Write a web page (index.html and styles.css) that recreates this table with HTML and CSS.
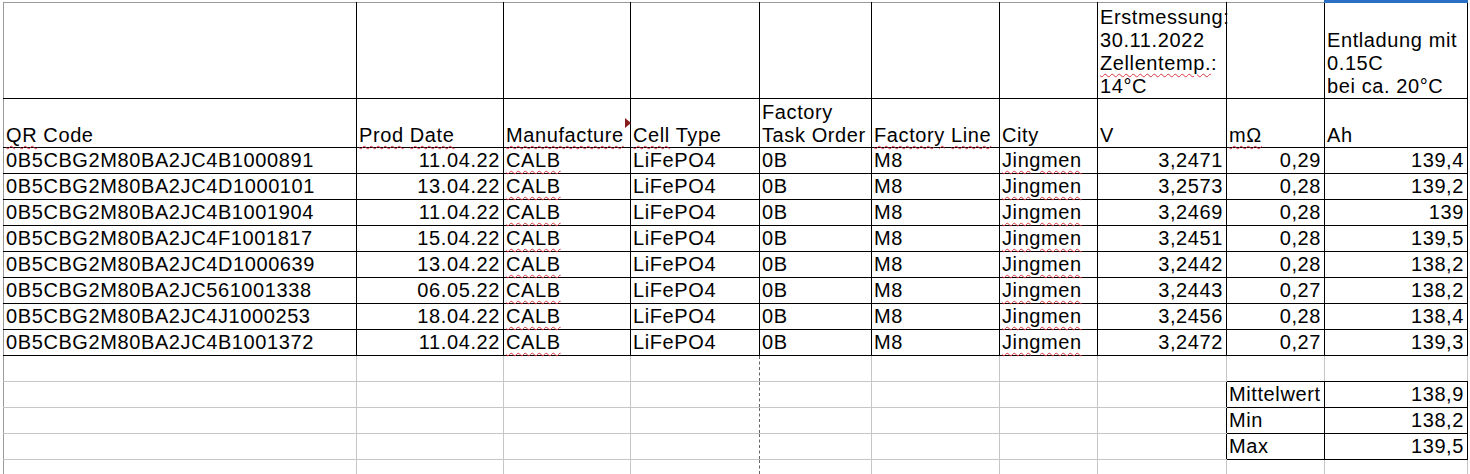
FILE: index.html
```html
<!DOCTYPE html>
<html lang="de">
<head>
  <meta charset="UTF-8" />
  <title>Zellen Messung</title>
  <link rel="stylesheet" href="styles.css">
</head>
<body>
  <table class="sheet">
    <colgroup>
      <col class="c-qr"><col class="c-date"><col class="c-man"><col class="c-type"><col class="c-task">
      <col class="c-line"><col class="c-city"><col class="c-v"><col class="c-mohm"><col class="c-ah">
    </colgroup>

    <tr class="note">
      <td></td><td></td><td></td><td></td><td></td><td></td><td></td>
      <td class="wrap">Erstmessung:<br>30.11.2022<br><span class="sp">Zellentemp.</span>:<br>14°C</td>
      <td></td>
      <td class="wrap sel">Entladung mit<br>0.15C<br>bei ca. 20°C</td>
    </tr>

    <tr class="head">
      <td><span class="sp">QR</span> Code</td>
      <td><span class="sp">Prod</span> <span class="sp">Date</span></td>
      <td class="has-note"><span class="sp">Manufacture</span><span class="marker"></span></td>
      <td><span class="sp">Cell</span> Type</td>
      <td>Factory<br>Task Order</td>
      <td><span class="sp">Factory</span> <span class="sp">Line</span></td>
      <td>City</td>
      <td>V</td>
      <td><span class="sp">mΩ</span></td>
      <td>Ah</td>
    </tr>

    <tr class="data"><td>0B5CBG2M80BA2JC4B1000891</td><td class="num">11.04.22</td><td><span class="sp">CALB</span></td><td>LiFePO4</td><td>0B</td><td>M8</td><td><span class="sp">Jingmen</span></td><td class="num">3,2471</td><td class="num">0,29</td><td class="num">139,4</td></tr>
    <tr class="data"><td>0B5CBG2M80BA2JC4D1000101</td><td class="num">13.04.22</td><td><span class="sp">CALB</span></td><td>LiFePO4</td><td>0B</td><td>M8</td><td><span class="sp">Jingmen</span></td><td class="num">3,2573</td><td class="num">0,28</td><td class="num">139,2</td></tr>
    <tr class="data"><td>0B5CBG2M80BA2JC4B1001904</td><td class="num">11.04.22</td><td><span class="sp">CALB</span></td><td>LiFePO4</td><td>0B</td><td>M8</td><td><span class="sp">Jingmen</span></td><td class="num">3,2469</td><td class="num">0,28</td><td class="num">139</td></tr>
    <tr class="data"><td>0B5CBG2M80BA2JC4F1001817</td><td class="num">15.04.22</td><td><span class="sp">CALB</span></td><td>LiFePO4</td><td>0B</td><td>M8</td><td><span class="sp">Jingmen</span></td><td class="num">3,2451</td><td class="num">0,28</td><td class="num">139,5</td></tr>
    <tr class="data"><td>0B5CBG2M80BA2JC4D1000639</td><td class="num">13.04.22</td><td><span class="sp">CALB</span></td><td>LiFePO4</td><td>0B</td><td>M8</td><td><span class="sp">Jingmen</span></td><td class="num">3,2442</td><td class="num">0,28</td><td class="num">138,2</td></tr>
    <tr class="data"><td>0B5CBG2M80BA2JC561001338</td><td class="num">06.05.22</td><td><span class="sp">CALB</span></td><td>LiFePO4</td><td>0B</td><td>M8</td><td><span class="sp">Jingmen</span></td><td class="num">3,2443</td><td class="num">0,27</td><td class="num">138,2</td></tr>
    <tr class="data"><td>0B5CBG2M80BA2JC4J1000253</td><td class="num">18.04.22</td><td><span class="sp">CALB</span></td><td>LiFePO4</td><td>0B</td><td>M8</td><td><span class="sp">Jingmen</span></td><td class="num">3,2456</td><td class="num">0,28</td><td class="num">138,4</td></tr>
    <tr class="data"><td>0B5CBG2M80BA2JC4B1001372</td><td class="num">11.04.22</td><td><span class="sp">CALB</span></td><td>LiFePO4</td><td>0B</td><td>M8</td><td><span class="sp">Jingmen</span></td><td class="num">3,2472</td><td class="num">0,27</td><td class="num">139,3</td></tr>

    <tr class="blank"><td></td><td></td><td></td><td></td><td></td><td></td><td></td><td></td><td class="cap"></td><td class="cap"></td></tr>
    <tr class="blank"><td></td><td></td><td></td><td></td><td></td><td></td><td></td><td class="edge-r"></td><td class="stat">Mittelwert</td><td class="stat num">138,9</td></tr>
    <tr class="blank"><td></td><td></td><td></td><td></td><td></td><td></td><td></td><td class="edge-r"></td><td class="stat">Min</td><td class="stat num">138,2</td></tr>
    <tr class="blank"><td></td><td></td><td></td><td></td><td></td><td></td><td></td><td class="edge-r"></td><td class="stat">Max</td><td class="stat num">139,5</td></tr>
    <tr class="blank"><td></td><td></td><td></td><td></td><td></td><td></td><td></td><td></td><td></td><td></td></tr>
  </table>
</body>
</html>
```

FILE: styles.css
```css
html, body {
  overflow: hidden;
}

body {
  background-color: #fff;
  font-family: 'Liberation Sans', Arial, sans-serif;
  font-size: 20px;
  letter-spacing: 0.6px;
  color: #000;
  margin: 0;
  padding: 2px 0 0 3px;
}

.sheet {
  border-collapse: collapse;
  table-layout: fixed;
  width: 1465px;
}

.c-qr { width: 353px; }
.c-date { width: 147px; }
.c-man { width: 127px; }
.c-type { width: 129px; }
.c-task { width: 112px; }
.c-line { width: 128px; }
.c-city { width: 98px; }
.c-v { width: 129px; }
.c-mohm { width: 98px; }
.c-ah { width: 143px; }

.sheet td {
  border: 1px solid #c6c6c6;
  padding: 0 3px 0 2px;
  line-height: 23px;
  white-space: nowrap;
  overflow: visible;
  vertical-align: bottom;
  text-align: left;
}

.sheet .num {
  text-align: right;
}

/* measured block has black rules */
.note td,
.head td,
.data td {
  border-color: #000;
}

.note td {
  height: 95px;
  border-top-color: #9a9a9a;
}

.head td {
  height: 48px;
}

.data td {
  height: 25px;
  line-height: 25px;
}

.sheet tr td:first-child {
  border-left-color: #9a9a9a;
}

.blank td {
  height: 25px;
  line-height: 25px;
}

/* page break line */
.blank td:nth-child(4) {
  border-right: 1px dashed #666;
}

.blank td:nth-child(5) {
  border-left: 1px dashed #666;
}

.blank td.cap {
  border-bottom-color: #000;
}

.blank td.edge-r {
  border-right-color: #000;
}

.blank td.stat {
  border-color: #000;
}

.sel {
  position: relative;
}

.sel::before {
  content: "";
  position: absolute;
  top: -3px;
  left: -1px;
  right: -1px;
  height: 3px;
  background-color: #2a6fc6;
}

.has-note {
  position: relative;
}

.marker {
  position: absolute;
  right: -1px;
  top: 19px;
  width: 0;
  height: 0;
  border-top: 5px solid transparent;
  border-bottom: 5px solid transparent;
  border-left: 6px solid #8b1c1c;
}

/* spell check squiggle */
.sp {
  text-decoration: underline wavy #d9363e;
  text-decoration-thickness: 1px;
  text-underline-offset: 3px;
}
```
